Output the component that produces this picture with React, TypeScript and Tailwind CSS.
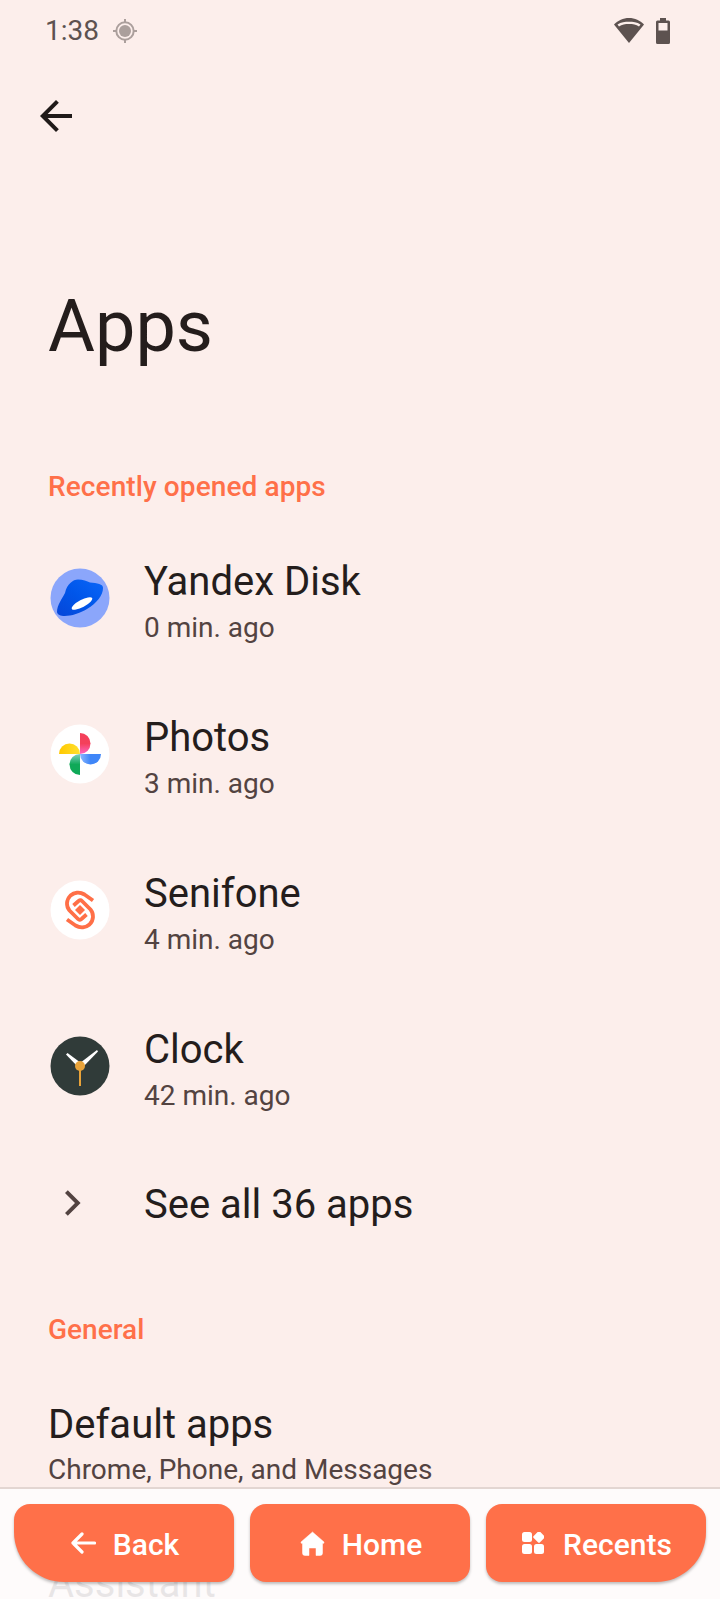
import React from "react";

const roboto = { fontFamily: "Roboto, 'Noto Sans', sans-serif" };

function Yandex() {
  return (
    <svg width="60" height="60" viewBox="0 0 60 60">
      <defs>
        <linearGradient id="yd" x1="0" y1="1" x2="1" y2="0">
          <stop offset="0" stopColor="#0646d8" />
          <stop offset="0.5" stopColor="#0056ea" />
          <stop offset="1" stopColor="#0a66f8" />
        </linearGradient>
      </defs>
      <circle cx="30" cy="30" r="29.500" fill="#8ba6fb" />
      <path d="M7 44 C7 37 12 31 15 25 C17 16 23 11.500 28 11.500 C33 11.500 37 13 40 14.500 C47 15 53.500 16 53 20 C53 27 47 35 37 41 C26 48 8 51 7 44 Z" fill="url(#yd)" />
      <ellipse cx="32" cy="35.500" rx="11.500" ry="3.600" transform="rotate(-28 32 35.500)" fill="#fff" />
    </svg>
  );
}

function Photos() {
  return (
    <svg width="60" height="60" viewBox="0 0 60 60">
      <defs>
        <linearGradient id="py" x1="0" y1="0" x2="1" y2="0">
          <stop offset="0" stopColor="#ffc800" />
          <stop offset="1" stopColor="#ffe02e" />
        </linearGradient>
        <linearGradient id="pr" x1="0" y1="0" x2="0" y2="1">
          <stop offset="0.500" stopColor="#f4405a" />
          <stop offset="1" stopColor="#ff66c4" />
        </linearGradient>
        <linearGradient id="pb" x1="1" y1="0" x2="0" y2="0">
          <stop offset="0.500" stopColor="#3f86f8" />
          <stop offset="1" stopColor="#8cb8ff" />
        </linearGradient>
        <linearGradient id="pg" x1="0" y1="1" x2="0" y2="0">
          <stop offset="0.500" stopColor="#0fa958" />
          <stop offset="1" stopColor="#7fd0c0" />
        </linearGradient>
      </defs>
      <circle cx="30" cy="30" r="29.500" fill="#fff" />
      <path d="M30 30 H9 A10.500 10.500 0 0 1 30 30 Z" fill="url(#py)" />
      <path d="M30 30 V9 A10.500 10.500 0 0 1 30 30 Z" fill="url(#pr)" />
      <path d="M30 30 H51 A10.500 10.500 0 0 1 30 30 Z" fill="url(#pb)" />
      <path d="M30 30 V51 A10.500 10.500 0 0 1 30 30 Z" fill="url(#pg)" />
    </svg>
  );
}

function Senifone() {
  return (
    <svg width="60" height="60" viewBox="0 0 60 60">
      <circle cx="30" cy="30" r="29.500" fill="#fff" />
      <g transform="translate(0.500 0.500)">
        <g fill="none" stroke="#ff6f47" strokeWidth="3.800">
          <path d="M42.500 20 L34 14 C29 11 23.500 12 20 15 C15.500 19.500 15.500 26 19 30 L27.500 38.500 Q29 40 31 38.500 L36 34" />
          <path d="M16.500 39 L25 45 C30 48 35.500 47 39 44 C43.500 39.500 43.500 33 40 29 L31.500 20.500 Q30 19 28 20.500 L23 25" />
        </g>
        <path d="M29.500 24.500 L34.500 29.500 L29.500 34.500 L24.500 29.500 Z" fill="#ff6f47" />
      </g>
    </svg>
  );
}

function ClockIcon() {
  return (
    <svg width="60" height="60" viewBox="0 0 60 60">
      <circle cx="30" cy="30" r="29.500" fill="#303b39" />
      <path d="M16 18.500 L17.500 17 L31 27 L28 31 Z" fill="#fff" />
      <path d="M47 14 L48 15.500 L33 31 L30 27 Z" fill="#fff" />
      <rect x="29" y="30" width="2" height="20" fill="#e8a33a" />
      <circle cx="30" cy="30" r="5" fill="#e8a33a" />
    </svg>
  );
}

function AppRow({ icon, name, time }: { icon: React.ReactNode; name: string; time: string }) {
  return (
    <div className="flex h-[156px] items-center">
      <div className="ml-[50px] w-[94px] shrink-0">{icon}</div>
      <div className="pt-[11px]">
        <div className="text-[40px] leading-[48px] text-[#241d1c]">{name}</div>
        <div className="text-[28px] leading-[44px] text-[#534341]">{time}</div>
      </div>
    </div>
  );
}

function NavButton({ corner, icon, label, gap }: { corner: string; icon: React.ReactNode; label: string; gap: string }) {
  return (
    <div className={`flex h-[78px] w-[220px] items-center justify-center bg-[#ff7049] pl-[2px] text-white shadow-[0_2px_3px_rgba(0,0,0,0.25)] ${corner} ${gap}`}>
      {icon}
      <span className="pt-[3px] text-[30px] font-medium leading-none">{label}</span>
    </div>
  );
}

export default function App() {
  return (
    <div className="relative h-[1599px] w-[720px] overflow-hidden bg-[#fceeeb]" style={roboto}>
      <div className="flex h-[61px] items-center justify-between pl-[45px] pr-[50px]">
        <div className="flex items-center gap-[14px]">
          <span className="text-[28px] leading-none text-[#5d5250]">1:38</span>
          <svg width="24" height="24" viewBox="0 0 24 24" className="opacity-50">
            <path d="M11 0h2v4h-2zM11 20h2v4h-2zM0 11h4v2H0zM20 11h4v2h-4z" fill="#5d5250" />
            <circle cx="12" cy="12" r="8.700" fill="none" stroke="#5d5250" strokeWidth="2" />
            <circle cx="12" cy="12" r="6" fill="#5d5250" />
          </svg>
        </div>
        <div className="flex items-center gap-[12px]">
          <svg width="30" height="25" viewBox="0 0 30 25">
            <path d="M15 25 L0 6.500 C4 2.500 9 0 15 0 C21 0 26 2.500 30 6.500 Z" fill="#5d5250" />
            <path d="M3.500 6.500 C7 4 11 3.700 15 3.700 C19 3.700 23 4 26.500 6.500 L25 8.500 C22 6.500 19 6 15 6 C11 6 8 6.500 5 8.500 Z" fill="#fceeeb" />
          </svg>
          <svg width="14" height="26" viewBox="0 0 14 26">
            <path d="M4 0h6v2.500h2.500a1.500 1.500 0 0 1 1.500 1.500V24.500a1.500 1.500 0 0 1-1.500 1.500H1.500A1.500 1.500 0 0 1 0 24.500V4a1.500 1.500 0 0 1 1.500-1.500H4z" fill="#5d5250" />
            <rect x="2.500" y="5" width="9" height="7.500" fill="#fceeeb" />
          </svg>
        </div>
      </div>

      <div className="ml-[32px] mt-[31px]">
        <svg width="48" height="48" viewBox="0 0 24 24" fill="#201a19">
          <path d="M20 11H7.830l5.590-5.590L12 4l-8 8 8 8 1.410-1.410L7.830 13H20v-2z" />
        </svg>
      </div>

      <h1 className="ml-[48px] mt-[145px] text-[72px] leading-[84px] text-[#241d1c]">Apps</h1>

      <div className="ml-[48px] mt-[98px] text-[28px] font-medium leading-[40px] tracking-[0.1px] text-[#ff7049]">Recently opened apps</div>

      <div className="mt-[13px]">
        <AppRow icon={<Yandex />} name="Yandex Disk" time="0 min. ago" />
        <AppRow icon={<Photos />} name="Photos" time="3 min. ago" />
        <AppRow icon={<Senifone />} name="Senifone" time="4 min. ago" />
        <AppRow icon={<ClockIcon />} name="Clock" time="42 min. ago" />
      </div>

      <div className="flex h-[120px] items-center">
        <div className="mb-[2px] ml-[49px] w-[95px] shrink-0">
          <svg width="48" height="48" viewBox="0 0 24 24" fill="#534341">
            <path d="M9.400 5.600 8 7l5 5-5 5 1.400 1.400L15.800 12z" />
          </svg>
        </div>
        <div className="mt-[2px] text-[40px] leading-[48px] text-[#241d1c]">See all 36 apps</div>
      </div>

      <div className="ml-[48px] mt-[46px] text-[28px] font-medium leading-[40px] text-[#ff7049]">General</div>

      <div className="ml-[48px] mt-[51px]">
        <div className="text-[40px] leading-[48px] text-[#241d1c]">Default apps</div>
        <div className="-mt-[1px] text-[28px] leading-[44px] text-[#534341]">Chrome, Phone, and Messages</div>
      </div>
      <div className="ml-[48px] mt-[68px] text-[40px] leading-[48px] text-[#241d1c]">Assistant</div>

      <div className="absolute bottom-0 left-0 right-0 h-[112px] border-t-2 border-[#e3d6d2] bg-[#fefcfd]/90">
        <div className="flex justify-between px-[14px] pt-[15px]">
          <NavButton
            corner="rounded-[16px] rounded-bl-[50px]"
            gap="gap-[17px]"
            label="Back"
            icon={
              <svg width="25" height="22" viewBox="0 0 25 22" fill="none" stroke="#fff" strokeWidth="3.200" strokeLinecap="round" strokeLinejoin="round">
                <path d="M23.500 11H2M11 2 2 11l9 9" />
              </svg>
            }
          />
          <NavButton
            corner="rounded-[16px]"
            gap="gap-[17px]"
            label="Home"
            icon={
              <svg width="25" height="25" viewBox="0 0 25 25" fill="#fff">
                <path d="M12.500 1 L24 11 Q24.500 12.500 22.500 12.500 V22 Q22.500 24.500 20 24.500 H16 V17 H9 V24.500 H5 Q2.500 24.500 2.500 22 V12.500 Q0.500 12.500 1 11 Z" stroke="#fff" strokeWidth="0.500" strokeLinejoin="round" />
              </svg>
            }
          />
          <NavButton
            corner="rounded-[16px] rounded-br-[50px]"
            gap="gap-[19px]"
            label="Recents"
            icon={
              <svg width="22" height="22" viewBox="0 0 22 22" fill="#fff">
                <rect x="0" y="0" width="10" height="10" rx="2.500" />
                <rect x="12.500" y="0.500" width="9" height="9" rx="1.500" transform="rotate(45 17 5)" />
                <rect x="0" y="12" width="10" height="10" rx="2.500" />
                <rect x="12" y="12" width="10" height="10" rx="2.500" />
              </svg>
            }
          />
        </div>
      </div>
    </div>
  );
}
